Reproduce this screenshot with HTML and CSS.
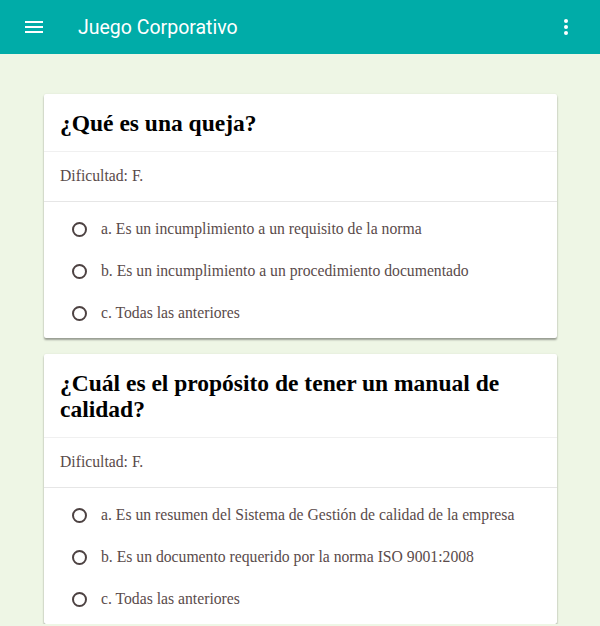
FILE: index.html
```html
<!DOCTYPE html>
<html lang="es">
<head>
<meta charset="utf-8">
<title>Juego Corporativo</title>
<link rel="stylesheet" href="styles.css">
</head>
<body>
<header class="appbar">
  <button class="icon-btn menu" aria-label="Menú">
    <svg width="24" height="24" viewBox="0 0 24 24"><path d="M3 6h18v2H3zM3 11h18v2H3zM3 16h18v2H3z" fill="#fff"/></svg>
  </button>
  <h1 class="appbar-title">Juego Corporativo</h1>
  <button class="icon-btn more" aria-label="Más">
    <svg width="24" height="24" viewBox="0 0 24 24"><circle cx="12" cy="6" r="2" fill="#fff"/><circle cx="12" cy="12" r="2" fill="#fff"/><circle cx="12" cy="18" r="2" fill="#fff"/></svg>
  </button>
</header>
<main class="content">
  <section class="card">
    <h2 class="card-title">¿Qué es una queja?</h2>
    <div class="card-meta">Dificultad: F.</div>
    <ul class="options">
      <li class="option"><span class="radio"></span>a. Es un incumplimiento a un requisito de la norma</li>
      <li class="option"><span class="radio"></span>b. Es un incumplimiento a un procedimiento documentado</li>
      <li class="option"><span class="radio"></span>c. Todas las anteriores</li>
    </ul>
  </section>
  <section class="card">
    <h2 class="card-title">¿Cuál es el propósito de tener un manual de calidad?</h2>
    <div class="card-meta">Dificultad: F.</div>
    <ul class="options">
      <li class="option"><span class="radio"></span>a. Es un resumen del Sistema de Gestión de calidad de la empresa</li>
      <li class="option"><span class="radio"></span>b. Es un documento requerido por la norma ISO 9001:2008</li>
      <li class="option"><span class="radio"></span>c. Todas las anteriores</li>
    </ul>
  </section>
</main>
</body>
</html>
```
FILE: styles.css
```css
* { box-sizing: border-box; }
html, body { margin: 0; padding: 0; }
body {
  background: #eef6e5;
  font-family: "Liberation Serif", "Times New Roman", serif;
  overflow: hidden;
}
.appbar {
  height: 54px;
  background: #00aca8;
  display: flex;
  align-items: center;
  padding: 0 22px 0 22px;
}
.icon-btn {
  background: none;
  border: 0;
  padding: 0;
  width: 24px;
  height: 24px;
  display: flex;
  cursor: pointer;
}
.appbar-title {
  margin: 0 0 0 32px;
  flex: 1;
  font-family: Roboto, "Liberation Sans", sans-serif;
  font-weight: 400;
  font-size: 19.5px;
  color: #fff;
}
.content {
  padding: 40px 43px 0 44px;
  display: flex;
  flex-direction: column;
  gap: 16px;
}
.card {
  background: #fff;
  border-radius: 2px;
  box-shadow: 0 2px 2px rgba(0,0,0,0.35), 0 0 2px rgba(0,0,0,0.08);
}
.card-title {
  margin: 0;
  padding: 16px 16px 15px;
  font-size: 23.5px;
  line-height: 26px;
  font-weight: bold;
  color: #000;
}
.card-meta {
  border-top: 1px solid #f0f0f0;
  border-bottom: 1px solid #e6e6e6;
  padding: 15px 16px 16px;
  font-size: 15.7px;
  line-height: 18px;
  color: #5a4b4b;
}
.options {
  list-style: none;
  margin: 0;
  padding: 6px 0 4px;
}
.option {
  height: 42px;
  display: flex;
  align-items: center;
  padding-left: 28px;
  font-size: 15.7px;
  color: #5a4b4b;
}
.radio {
  width: 15px;
  height: 15px;
  border: 2px solid #4d4242;
  border-radius: 50%;
  margin-right: 14px;
  flex: none;
}
```
